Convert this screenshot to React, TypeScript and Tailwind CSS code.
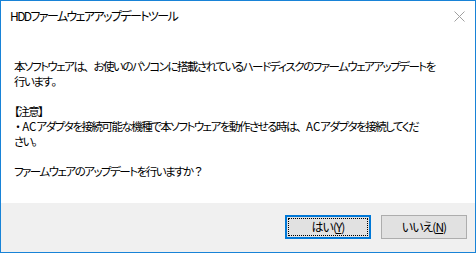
const font = "font-['Noto_Sans_CJK_JP','Noto_Sans',sans-serif] [font-feature-settings:'palt']";
const full = "[font-feature-settings:normal]";
const latin = "tracking-[0px]";

function CloseIcon() {
  return (
    <svg width="11" height="11" viewBox="0 0 11 11" className="block">
      <path d="M0.5 0.5 L10.5 10.5 M10.5 0.5 L0.5 10.5" stroke="#a0a0a0" strokeWidth="1" fill="none" />
    </svg>
  );
}

export default function App() {
  return (
    <div className={`w-[476px] h-[253px] border border-[#1883d7] bg-white flex flex-col text-black ${font}`}>
      {/* Title bar */}
      <div className="h-[30px] flex items-center justify-between pl-[9px] pr-[10px]">
        <span className="text-[12px] leading-none tracking-[-1.6px] whitespace-nowrap">HDDファームウェアアップデートツール</span>
        <CloseIcon />
      </div>

      {/* Message */}
      <div className="flex-1 pt-[28px] pl-[13px] text-[11.5px] leading-[15px] tracking-[-1.5px] whitespace-nowrap">
        <p>本ソフトウェアは<span className={full}>、</span>お使いのパソコンに搭載されているハードディスクのファームウェアアップデートを<br />行います<span className={full}>。</span></p>
        <p className="mt-[15px]">
          【注意】
          <br />
          <span className="pl-[1px] pr-[3px]">・</span><span className={latin}>AC</span>アダプタを接続可能な機種で本ソフトウェアを動作させる時は<span className={full}>、</span><span className={latin}>AC</span>アダプタを接続してくだ
          <br />
          さい<span className={full}>。</span>
        </p>
        <p className="mt-[15px]">ファームウェアのアップデートを行いますか<span className={full}>？</span></p>
      </div>

      {/* Buttons */}
      <div className="h-[49px] bg-[#f0f0f0] flex justify-end items-start pt-[12px] pr-[8px] gap-[10px]">
        <button className="w-[86px] h-[24px] border-2 border-[#0078d7] bg-[#e1e1e1] p-[1px]">
          <div className="w-full h-full border border-dotted border-black flex items-center justify-center text-[12px] leading-none tracking-[-1px]">
            はい(<span className="underline">Y</span>)
          </div>
        </button>
        <button className="w-[86px] h-[24px] border border-[#adadad] bg-[#e1e1e1] flex items-center justify-center text-[12px] leading-none tracking-[-1px]">
          いいえ(<span className="underline">N</span>)
        </button>
      </div>
    </div>
  );
}
